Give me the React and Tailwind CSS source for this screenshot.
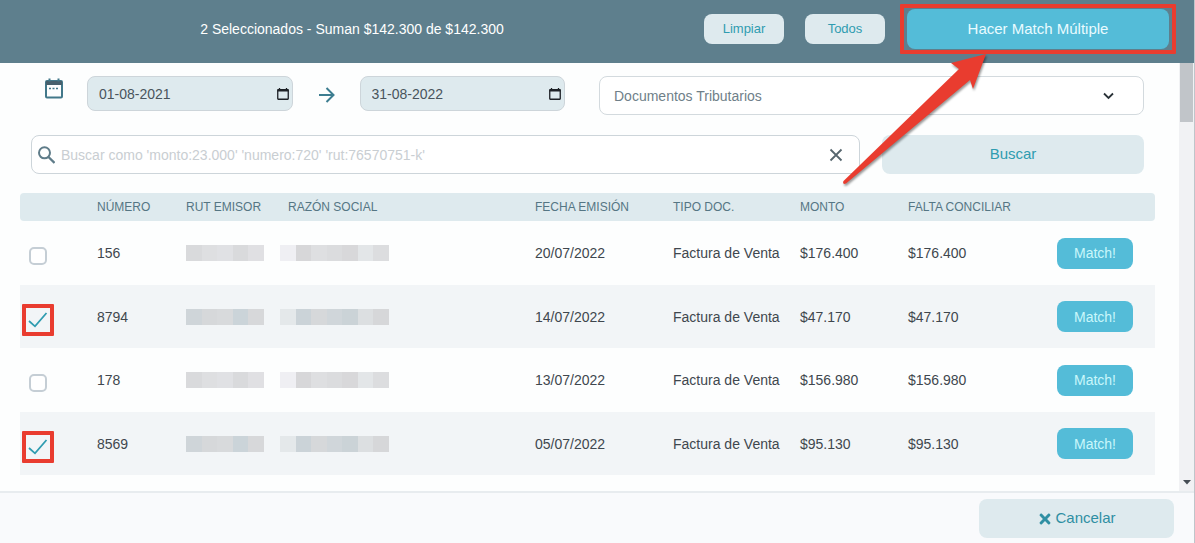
import React, { useState } from "react";
import { FaTimes } from "react-icons/fa";

const ROWS = [
  { numero: "156", fecha: "20/07/2022", tipo: "Factura de Venta", monto: "$176.400", falta: "$176.400", checked: false },
  { numero: "8794", fecha: "14/07/2022", tipo: "Factura de Venta", monto: "$47.170", falta: "$47.170", checked: true },
  { numero: "178", fecha: "13/07/2022", tipo: "Factura de Venta", monto: "$156.980", falta: "$156.980", checked: false },
  { numero: "8569", fecha: "05/07/2022", tipo: "Factura de Venta", monto: "$95.130", falta: "$95.130", checked: true },
];

const RUT_PLAIN = ["bg-[#d9dadc]", "bg-[#dedfe1]", "bg-[#e0e1e4]", "bg-[#d9dadc]", "bg-[#e0e0e3]"];
const RUT_TINT = ["bg-[#cfd5d9]", "bg-[#d6d8da]", "bg-[#d8dadc]", "bg-[#cbd4d9]", "bg-[#d7d8da]"];
const RAZON_PLAIN = ["bg-[#efeff3]", "bg-[#d7d7d9]", "bg-[#dedfe1]", "bg-[#dbdcde]", "bg-[#d8d8da]", "bg-[#e3e6e8]", "bg-[#dcdddf]"];
const RAZON_TINT = ["bg-[#e4e8ea]", "bg-[#cbd3d8]", "bg-[#d6d8da]", "bg-[#d0d6da]", "bg-[#cbd3d7]", "bg-[#dcdfe1]", "bg-[#d6d7d9]"];

function Redacted({ blocks, className }) {
  return (
    <div className={`flex h-4 ${className}`} aria-hidden="true">
      {blocks.map((tone, i) => (
        <span key={i} className={`flex-1 ${tone}`} />
      ))}
    </div>
  );
}

function DateField({ label, defaultValue }) {
  return (
    <div className="flex h-[35px] min-w-0 flex-1 items-center rounded-lg border border-[#cdd5da] bg-[#deeaee] pr-[3px] pl-[11px]">
      <input type="text" aria-label={label} defaultValue={defaultValue} className="w-full min-w-0 bg-transparent text-sm text-[#49545c] outline-none" />
      <button type="button" aria-label={`Abrir calendario ${label}`} className="shrink-0">
        <svg width="12" height="12" viewBox="0 0 12 12" fill="none" stroke="#1d2126">
          <rect x="0.75" y="1.75" width="10.5" height="9.5" rx="0.5" strokeWidth="1.3" />
          <path d="M0.5 2.500h11" strokeWidth="2" />
          <path d="M2.500 0v2M9.500 0v2" strokeWidth="1.3" />
        </svg>
      </button>
    </div>
  );
}

function RowCheck({ row }) {
  const [on, setOn] = useState(row.checked);
  return (
    <label className={`ml-0.5 grid size-8 place-items-center rounded-[1px] ${row.checked ? "border-4 border-[#e93c2f]" : ""}`}>
      <input
        type="checkbox"
        aria-label={`Seleccionar ${row.numero}`}
        checked={on}
        onChange={() => setOn(!on)}
        className="col-start-1 row-start-1 size-[18px] appearance-none rounded-[5px] border-2 border-[#c5ced5] bg-white checked:border-transparent checked:bg-transparent"
      />
      {on && (
        <svg className="pointer-events-none col-start-1 row-start-1" width="20" height="16" viewBox="0 0 20 16" fill="none" stroke="#2f9cb0" strokeWidth="1.8">
          <path d="M1 9l6 5.300L18.500 1" />
        </svg>
      )}
    </label>
  );
}

export default function App() {
  return (
    <div className="flex min-h-screen flex-col border-r border-[#bfc5ca] bg-[#fdfefe] font-['Liberation_Sans',Arial,sans-serif]">
      <header className="flex h-[63px] shrink-0 items-center bg-[#5e7f8d] pr-[25px] pb-[5px]">
        <p className="flex-1 text-center text-sm text-white">2 Seleccionados - Suman $142.300 de $142.300</p>
        <button type="button" className="h-[30px] w-20 rounded-lg bg-[#deeaee] text-[13px] text-[#2f9cb0]">Limpiar</button>
        <button type="button" className="ml-[21px] h-[30px] w-20 rounded-lg bg-[#deeaee] text-[13px] text-[#2f9cb0]">Todos</button>
        <div className="relative ml-[22px] w-[262px]">
          <button type="button" className="h-10 w-full rounded-lg bg-[#54bcd8] text-[15px] text-[#e9fbff]">Hacer Match Múltiple</button>
          <div className="pointer-events-none absolute -inset-x-1.5 -inset-y-1 -m-px rounded-[1px] border-4 border-[#e93c2f]" />
          <svg className="pointer-events-none absolute top-11 -left-[67px] z-10 drop-shadow-[1px_2px_1px_rgba(0,0,0,0.4)]" width="150" height="134" viewBox="0 0 150 134" fill="#e93c2f">
            <path d="M146 1L111 10L119 16L3.500 128Q2.500 130 4 131L6 130.500L130 27L133 36Z" />
          </svg>
        </div>
      </header>

      <div className="flex flex-1">
        <main className="min-w-0 flex-1 pb-3.5">
          <div className="flex items-start pt-[13px] pr-[35px] pl-11">
            <svg className="mt-0.5 shrink-0" width="20" height="21" viewBox="0 0 20 21" fill="none" stroke="#42788a">
              <rect x="2" y="3" width="16" height="16.500" rx="1" strokeWidth="2" />
              <path d="M2 5h16" strokeWidth="4" stroke="#47606d" />
              <path d="M5.500 0.500v3M14.500 0.500v3" strokeWidth="2" />
              <path d="M5 10.500h10" strokeWidth="1.500" strokeDasharray="2 1.500" />
            </svg>
            <div className="ml-[23px] flex min-w-0 flex-[478] items-center">
              <DateField label="Desde" defaultValue="01-08-2021" />
              <svg className="mx-[25px] mt-0.5 shrink-0" width="17" height="16" viewBox="0 0 17 16" fill="none" stroke="#3c7d90" strokeWidth="2">
                <path d="M1 8h14.500M8.500 1l7 7-7 7" />
              </svg>
              <DateField label="Hasta" defaultValue="31-08-2022" />
            </div>
            <div className="relative ml-[34px] min-w-0 flex-[545]">
              <select aria-label="Tipo de documento" className="h-[39px] w-full appearance-none rounded-lg border border-[#d3dade] bg-white px-3.5 text-sm text-[#6f7f89] outline-none">
                <option>Documentos Tributarios</option>
              </select>
              <svg className="pointer-events-none absolute top-4 right-[30px]" width="11" height="8" viewBox="0 0 11 8" fill="none" stroke="#2a3238" strokeWidth="1.800">
                <path d="M1 1.500l4.500 4.500L10 1.500" />
              </svg>
            </div>
          </div>

          <div className="mt-5 flex gap-[22px] pr-[35px] pl-[31px]">
            <div className="flex h-[39px] min-w-0 flex-1 items-center rounded-lg border border-[#cdd5da] bg-white pr-4 pl-1.5">
              <svg className="shrink-0" width="17" height="18" viewBox="0 0 17 18" fill="none" stroke="#5f7c89" strokeWidth="2">
                <circle cx="6.500" cy="6.800" r="5.500" />
                <path d="M10.500 11l6 6" strokeWidth="2.300" />
              </svg>
              <input type="text" aria-label="Buscar documentos" placeholder="Buscar como 'monto:23.000' 'numero:720' 'rut:76570751-k'" className="ml-1.5 min-w-0 flex-1 bg-transparent text-sm text-[#49545c] outline-none placeholder:text-[#c9ced2]" />
              <button type="button" aria-label="Borrar búsqueda">
                <svg width="14" height="14" viewBox="0 0 14 14" fill="none" stroke="#56656e" strokeWidth="1.800">
                  <path d="M1.500 1.500l11 11M12.500 1.500l-11 11" />
                </svg>
              </button>
            </div>
            <button type="button" className="h-[39px] w-[262px] rounded-lg bg-[#deeaee] text-[15px] text-[#2f9cb0]">Buscar</button>
          </div>

          <div className="mt-[19px] pr-6 pl-5">
            <table className="w-full table-fixed text-left">
              <thead>
                <tr className="h-7 text-xs text-[#557684] [&>th]:bg-[#deeaee] [&>th]:font-normal">
                  <th className="w-[77px] rounded-l" aria-label="Selección" />
                  <th className="w-[89px]">NÚMERO</th>
                  <th className="w-[102px]">RUT EMISOR</th>
                  <th>RAZÓN SOCIAL</th>
                  <th className="w-[138px]">FECHA EMISIÓN</th>
                  <th className="w-[127px]">TIPO DOC.</th>
                  <th className="w-[108px]">MONTO</th>
                  <th className="w-[149px]">FALTA CONCILIAR</th>
                  <th className="w-[98px] rounded-r" aria-label="Acción" />
                </tr>
              </thead>
              <tbody className="text-sm text-[#3f474e]">
                {ROWS.map((row) => (
                  <tr key={row.numero} className="h-16 even:h-[63px] even:bg-[#f2f5f7]">
                    <td className="pt-1.5"><RowCheck row={row} /></td>
                    <td>{row.numero}</td>
                    <td><Redacted blocks={row.checked ? RUT_TINT : RUT_PLAIN} className="w-[78px]" /></td>
                    <td><Redacted blocks={row.checked ? RAZON_TINT : RAZON_PLAIN} className="-ml-2 w-[109px]" /></td>
                    <td>{row.fecha}</td>
                    <td>{row.tipo}</td>
                    <td>{row.monto}</td>
                    <td>{row.falta}</td>
                    <td>
                      <button type="button" className="block h-[31px] w-[76px] rounded-lg bg-[#54bcd8] text-sm text-[#c9f7fb]">Match!</button>
                    </td>
                  </tr>
                ))}
              </tbody>
            </table>
          </div>
        </main>

        <div className="flex w-[15px] shrink-0 flex-col items-center justify-between bg-[#f1f2f4] pb-1.5" aria-hidden="true">
          <div className="h-[59px] w-[13px] bg-[#c1c5c9]" />
          <svg width="8" height="5" viewBox="0 0 8 5" fill="#454d54"><path d="M0 0h8L4 4.500z" /></svg>
        </div>
      </div>

      <footer className="flex h-[52px] shrink-0 justify-end border-t-2 border-[#e8ecef] bg-[#f9fafc] pt-1.5 pr-5">
        <button type="button" className="flex h-[39px] w-[195px] items-center justify-center gap-0.5 rounded-lg bg-[#deeaee] text-[15px] text-[#2f8fa3]">
          <FaTimes className="size-4" /> Cancelar
        </button>
      </footer>
    </div>
  );
}
